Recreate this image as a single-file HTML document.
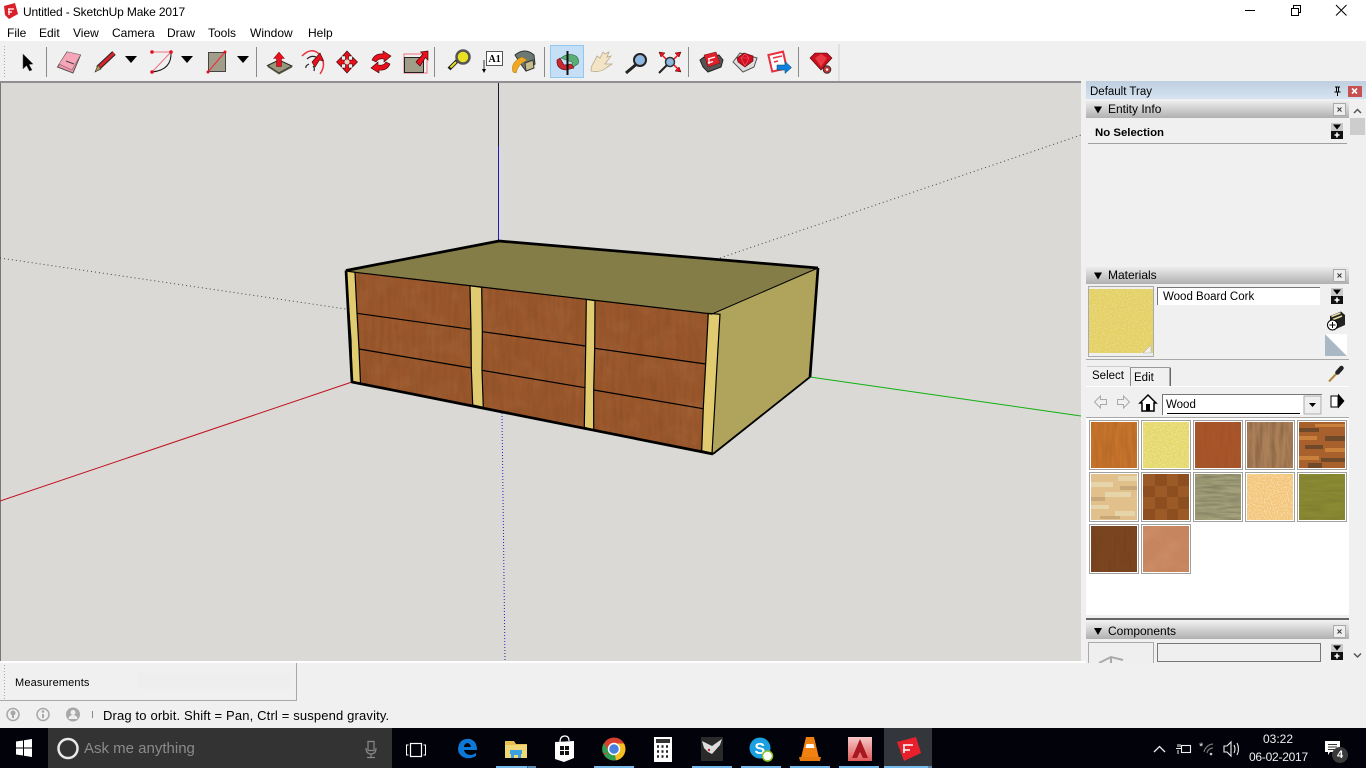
<!DOCTYPE html>
<html><head><meta charset="utf-8"><style>
html,body{margin:0;padding:0;width:1366px;height:768px;overflow:hidden;background:#f0f0f0}
body{position:relative;font-family:"Liberation Sans",sans-serif;font-size:12px;color:#000}
svg{position:absolute;left:0;top:0}
.t{position:absolute;white-space:nowrap;line-height:16px}
</style></head><body>
<svg width="1366" height="768" viewBox="0 0 1366 768" xmlns="http://www.w3.org/2000/svg">
<defs>
<filter id="gv" x="0" y="0" width="100%" height="100%"><feTurbulence type="fractalNoise" baseFrequency="0.25 0.03" numOctaves="3" seed="3"/><feColorMatrix values="0 0 0 0 0 0 0 0 0 0 0 0 0 0 0 1.6 0 0 0 -0.55"/></filter>
<filter id="gw" x="0" y="0" width="100%" height="100%"><feTurbulence type="fractalNoise" baseFrequency="0.04 0.05" numOctaves="4" seed="7"/><feColorMatrix values="0 0 0 0 1 0 0 0 0 0.7 0 0 0 0 0.45 1.4 0 0 0 -0.55"/></filter>
<filter id="gs" x="0" y="0" width="100%" height="100%"><feTurbulence type="fractalNoise" baseFrequency="0.7" numOctaves="2" seed="5"/><feColorMatrix values="0 0 0 0 1 0 0 0 0 1 0 0 0 0 .85 2.4 0 0 0 -1"/></filter>
<filter id="gh" x="0" y="0" width="100%" height="100%"><feTurbulence type="fractalNoise" baseFrequency="0.04 0.4" numOctaves="3" seed="9"/><feColorMatrix values="0 0 0 0 0 0 0 0 0 0 0 0 0 0 0 1.6 0 0 0 -0.55"/></filter>
<clipPath id="front"><polygon points="346,271 712,314 713,454 352,382"/></clipPath>
<linearGradient id="hdr" x1="0" y1="0" x2="0" y2="1"><stop offset="0" stop-color="#ececec"/><stop offset="1" stop-color="#b0b0b0"/></linearGradient>
<linearGradient id="tray" x1="0" y1="0" x2="0" y2="1"><stop offset="0" stop-color="#bfcfe0"/><stop offset="1" stop-color="#d6e3f0"/></linearGradient>
<linearGradient id="acad" x1="0" y1="0" x2="0" y2="1"><stop offset="0" stop-color="#f6c8c8"/><stop offset="1" stop-color="#e05a5a"/></linearGradient>
</defs>

<!-- chrome -->
<rect width="1366" height="41" fill="#fff"/>
<rect y="41" width="1366" height="40" fill="#f0f0f0"/>
<rect x="0" y="81" width="1081" height="2" fill="#8f8f8f"/>
<rect x="838.500" y="44" width="1" height="37" fill="#d0d0d0"/>
<path d="M4.500 46V78" stroke="#aaa" stroke-dasharray="1 2" fill="none"/>
<path d="M46.500 47V77M256.500 47V77M434.500 47V77M544.500 47V77M688.500 47V77M798.500 47V77" stroke="#8a8a8a" fill="none"/>

<!-- viewport -->
<rect x="1" y="83" width="1080" height="578" fill="#dad9d5"/>
<rect x="0" y="83" width="1" height="578" fill="#777"/>
<rect x="0" y="661" width="1086" height="2" fill="#fff"/>

<!-- axes -->
<path d="M498.500 83V146" stroke="#1a1a2e"/>
<path d="M498.500 146V241" stroke="#1c1cc8"/>
<path d="M0 501L352 382" stroke="#c01020"/>
<path d="M810 377L1081 416" stroke="#10b010"/>
<path d="M720 258L1081 135" stroke="#444" stroke-dasharray="1 3"/>
<path d="M0 258L346 309" stroke="#444" stroke-dasharray="1 3"/>
<path d="M502 413L505 661" stroke="#2020d0" stroke-dasharray="1 2"/>

<!-- box -->
<polygon points="346,271 499,241 818,268 712,314" fill="#857d47"/>
<polygon points="712,314 818,268 810,377 713,454" fill="#b0a45c"/>
<polygon points="346,271 712,314 713,454 352,382" fill="#9a572b"/>
<g clip-path="url(#front)"><rect x="340" y="265" width="380" height="195" filter="url(#gw)" opacity=".1"/><rect x="340" y="265" width="380" height="195" filter="url(#gv)" opacity=".07"/></g>
<g fill="#e0cb70" stroke="#000" stroke-width="1.200">
<polygon points="346,271 355,272.300 357,313 359,349 360.500,383.500 352,382 351,340 348,300"/>
<polygon points="470,285.700 481.700,287.300 482.300,331.700 482,370 483.300,407.300 472.700,405 471.300,368.300 471,329.300"/>
<polygon points="586.300,299.300 595,300.700 594.700,348.300 593.700,389.300 593.700,430 584.300,427.300 585,387.300 585.700,346.700"/>
<polygon points="708.300,313.300 720,314.300 717,365 714.500,410 712,453.300 701.700,450.700 703.300,408 705.700,363.300"/>
</g>
<path d="M357 313.300L471 329.300M482.300 331.700L585.700 346M594.700 348.300L705.700 364M359 349L471.300 368M482 370.300L585 387.700M594 390L703 408.700" stroke="#000" stroke-width="1.200" fill="none"/>
<path d="M355 272.300L712 314" stroke="#000" stroke-width="1.200" fill="none"/>
<path d="M712 314L818 268" stroke="#000" stroke-width="1" fill="none"/>
<path d="M346 270.500L499 241L818 268M346 270.500L352 382L713 454M810 377L818 268" fill="none" stroke="#000" stroke-width="2.700" stroke-linejoin="round"/>
<path d="M713 454L810 377" fill="none" stroke="#000" stroke-width="1.800"/>

<!-- tray -->
<rect x="1086" y="81" width="280" height="18" fill="url(#tray)"/>
<path d="M1335 87h5M1336.500 87v5h2v-5M1334.500 92h6M1337.500 92v4" stroke="#000" fill="none"/>
<rect x="1348" y="86" width="14" height="11" fill="#c75050"/>
<path d="M1352 88.500l5 5M1357 88.500l-5 5" stroke="#fff" stroke-width="1.600"/>
<rect x="1349" y="100" width="17" height="563" fill="#f0f0f0"/>
<path d="M1354 113l3.500-3.500l3.500 3.500" stroke="#555" stroke-width="1.500" fill="none"/>
<rect x="1350" y="118" width="15" height="17" fill="#cdcdcd"/>
<path d="M1354 653.500l3.500 3.500l3.500-3.500" stroke="#555" stroke-width="1.500" fill="none"/>

<rect x="1086" y="101" width="263" height="17" fill="url(#hdr)"/>
<path d="M1094 106.500h8l-4 7z" fill="#000"/>
<rect x="1333.500" y="103.500" width="12" height="12" fill="#eee" stroke="#aaa"/>
<path d="M1337.500 107.500l4 4M1341.500 107.500l-4 4" stroke="#333"/>
<rect x="1088" y="143" width="259" height="1" fill="#a0a0a0"/>
<g id="exp"><rect x="1331" y="123" width="12" height="8" fill="#c8c8c8"/><path d="M1333 124.500h8l-4 5z" fill="#000"/><rect x="1331" y="131" width="12" height="8" fill="#111"/><path d="M1337 132.500v5M1334.500 135h5" stroke="#fff" stroke-width="1.600"/></g>

<rect x="1086" y="267" width="263" height="17" fill="url(#hdr)"/>
<path d="M1094 272.500h8l-4 7z" fill="#000"/>
<rect x="1333.500" y="269.500" width="12" height="12" fill="#eee" stroke="#aaa"/>
<path d="M1337.500 273.500l4 4M1341.500 273.500l-4 4" stroke="#333"/>
<rect x="1088.500" y="286.500" width="65" height="70" fill="#efefef" stroke="#aaa"/>
<rect x="1089" y="289" width="64" height="64" fill="#e3cf62"/>
<rect x="1089" y="289" width="64" height="64" filter="url(#gs)" opacity=".35"/>
<path d="M1151 345v8h-8z" fill="#efefef" stroke="#aaa" stroke-width=".5"/>
<rect x="1157" y="287" width="163" height="18" fill="#fff"/>
<path d="M1157.500 305V287.500H1320" stroke="#777" fill="none"/>
<use href="#exp" y="165"/>
<path d="M1330 316L1341 311.500L1345 315V325L1336 329L1330 325Z" fill="#222"/>
<path d="M1331.500 316.500l9-3.500M1333 319.500l9-3.500" stroke="#e8e0a0" stroke-width="1.500"/>
<circle cx="1332.500" cy="325" r="5" fill="#fff" stroke="#000"/>
<path d="M1332.500 322v6M1329.500 325h6" stroke="#000"/>
<polygon points="1325,334 1347,356 1325,356" fill="#a9b8c4"/><polygon points="1325,334 1347,334 1347,356" fill="#fff"/>
<rect x="1086" y="359" width="263" height="1" fill="#a8a8a8"/>
<rect x="1086" y="386" width="263" height="1" fill="#fff"/>
<path d="M1130.500 367v19" stroke="#888"/>
<path d="M1131 367.500h38.500M1170 367v19" stroke="#999" fill="none" stroke-width="1"/>
<rect x="1169.500" y="368" width="1.500" height="18" fill="#666"/>
<path d="M1087 366.500h43" stroke="#ccc"/>
<path d="M1329 381.500L1337 373" stroke="#b08a40" stroke-width="2.200"/>
<path d="M1337.500 372.500L1341.500 368" stroke="#222" stroke-width="4.500" stroke-linecap="round"/>
<path d="M1094.500 402l6-6v3.500h6v5h-6v3.500z" fill="#f0f0f0" stroke="#aaa"/>
<path d="M1129.500 402l-6-6v3.500h-6v5h6v3.500z" fill="#f0f0f0" stroke="#aaa"/>
<path d="M1140 403l8-8l8 8h-2v8h-12v-8z" fill="#fff" stroke="#000" stroke-width="1.500"/>
<rect x="1146" y="404" width="4" height="7" fill="#000"/>
<rect x="1162" y="394" width="160" height="21" fill="#fff"/>
<path d="M1162.500 415V394.500H1322" stroke="#777" fill="none"/>
<rect x="1304" y="396" width="17" height="18" fill="#eee" stroke="#aaa"/>
<path d="M1309 403h7l-3.500 4z" fill="#000"/>
<path d="M1167 413.500H1300" stroke="#000"/>
<rect x="1331" y="396" width="7" height="11" fill="#fff" stroke="#000"/>
<path d="M1338 393.500l6.500 7.500l-6.500 7.500z" fill="#000"/>
<rect x="1086" y="417" width="263" height="1" fill="#a8a8a8"/>
<rect x="1086" y="418" width="263" height="197" fill="#fff"/>
<rect x="1086" y="618" width="263" height="2" fill="#666"/>
<rect x="1086" y="622" width="263" height="17" fill="url(#hdr)"/>
<path d="M1094 628h8l-4 7z" fill="#000"/>
<rect x="1333.500" y="625.500" width="12" height="12" fill="#eee" stroke="#aaa"/>
<path d="M1337.500 629.500l4 4M1341.500 629.500l-4 4" stroke="#333"/>
<rect x="1088.500" y="642.500" width="65" height="30" fill="#efefef" stroke="#aaa"/>
<path d="M1099 663l12-6l12 3M1111 657v6" stroke="#aaa" stroke-width="2" fill="none"/>
<rect x="1157.500" y="643.500" width="163" height="18" fill="#efefef" stroke="#777"/>
<use href="#exp" y="521"/>
<rect x="1086" y="663" width="263" height="12" fill="#f0f0f0"/>

<!-- thumbs -->
<g stroke="#a0a0a0" fill="#fff">
<rect x="1089.500" y="420.500" width="49" height="49"/><rect x="1141.500" y="420.500" width="49" height="49"/><rect x="1193.500" y="420.500" width="49" height="49"/><rect x="1245.500" y="420.500" width="49" height="49"/><rect x="1297.500" y="420.500" width="49" height="49"/>
<rect x="1089.500" y="472.500" width="49" height="49"/><rect x="1141.500" y="472.500" width="49" height="49"/><rect x="1193.500" y="472.500" width="49" height="49"/><rect x="1245.500" y="472.500" width="49" height="49"/><rect x="1297.500" y="472.500" width="49" height="49"/>
<rect x="1089.500" y="524.500" width="49" height="49"/><rect x="1141.500" y="524.500" width="49" height="49"/>
</g>
<rect x="1091" y="422" width="46" height="46" fill="#c8742c"/><rect x="1091" y="422" width="46" height="46" filter="url(#gv)" opacity=".12"/>
<rect x="1143" y="422" width="46" height="46" fill="#e4d666"/><rect x="1143" y="422" width="46" height="46" filter="url(#gs)" opacity=".5"/>
<rect x="1195" y="422" width="46" height="46" fill="#a9552a"/><rect x="1195" y="422" width="46" height="46" filter="url(#gv)" opacity=".06"/>
<rect x="1247" y="422" width="46" height="46" fill="#ac8058"/><rect x="1247" y="422" width="46" height="46" filter="url(#gv)" opacity=".25"/>
<rect x="1299" y="422" width="46" height="46" fill="#a8602c"/>
<g fill="#6f4a2a"><rect x="1299" y="428" width="20" height="4"/><rect x="1325" y="436" width="20" height="5"/><rect x="1305" y="445" width="18" height="4"/><rect x="1321" y="458" width="24" height="4"/><rect x="1308" y="463" width="14" height="5"/></g>
<g fill="#c8803a"><rect x="1315" y="424" width="30" height="3"/><rect x="1299" y="436" width="18" height="4"/><rect x="1325" y="448" width="20" height="4"/><rect x="1299" y="456" width="20" height="4"/></g>

<rect x="1091" y="474" width="46" height="46" fill="#e2c08c"/>
<g fill="#e6d4aa"><rect x="1091" y="482" width="22" height="5"/><rect x="1118" y="476" width="19" height="5"/><rect x="1105" y="492" width="26" height="5"/><rect x="1091" y="505" width="18" height="4"/><rect x="1115" y="511" width="20" height="5"/></g>
<g fill="#c8a878"><rect x="1091" y="497" width="14" height="4"/><rect x="1120" y="486" width="17" height="4"/><rect x="1100" y="516" width="20" height="3"/></g>
<rect x="1143" y="474" width="46" height="46" fill="#8e4f20"/>
<g fill="#9c5a26"><rect x="1143" y="474" width="12" height="12"/><rect x="1167" y="474" width="11" height="12"/><rect x="1155" y="486" width="12" height="11"/><rect x="1178" y="486" width="11" height="11"/><rect x="1143" y="497" width="12" height="12"/><rect x="1167" y="497" width="11" height="12"/><rect x="1155" y="509" width="12" height="11"/><rect x="1178" y="509" width="11" height="11"/></g>
<rect x="1195" y="474" width="46" height="46" fill="#a3a07a"/><rect x="1195" y="474" width="46" height="46" filter="url(#gh)" opacity=".25"/>
<rect x="1247" y="474" width="46" height="46" fill="#f3c377"/><rect x="1247" y="474" width="46" height="46" filter="url(#gs)" opacity=".6"/>
<rect x="1299" y="474" width="46" height="46" fill="#8a8a34"/><rect x="1299" y="474" width="46" height="46" filter="url(#gh)" opacity=".1"/>

<rect x="1091" y="526" width="46" height="46" fill="#7b4520"/><rect x="1091" y="526" width="46" height="46" filter="url(#gv)" opacity=".06"/>
<rect x="1143" y="526" width="46" height="46" fill="#c6855f"/><rect x="1143" y="526" width="46" height="46" filter="url(#gw)" opacity=".15"/>

<!-- bottom -->
<rect x="0" y="663" width="296" height="37" fill="#f0f0f0"/>
<path d="M296.500 663V700.500H0" stroke="#a8a8a8" fill="none"/>
<path d="M4.500 665V699" stroke="#aaa" stroke-dasharray="1 2"/>
<rect x="138" y="673" width="154" height="16" fill="#eeeeee"/>
<g fill="none" stroke="#a8a8a8" stroke-width="1.500"><circle cx="13" cy="714.500" r="6"/><circle cx="43" cy="714.500" r="6"/></g>
<circle cx="13" cy="713" r="2.500" fill="#a8a8a8"/><path d="M13 714v4" stroke="#a8a8a8" stroke-width="2"/>
<circle cx="43" cy="711.500" r="1.300" fill="#a8a8a8"/><path d="M43 714v4" stroke="#a8a8a8" stroke-width="2"/>
<circle cx="73" cy="714.500" r="7" fill="#a8a8a8"/><circle cx="73" cy="712.500" r="2.500" fill="#eee"/><path d="M68.500 719a4.500 4 0 0 1 9 0" fill="#eee"/>
<path d="M92.500 711v7" stroke="#888"/>

<!-- toolbar icons -->
<path d="M23 54V69L26.500 65.500L29.500 71L32 70L29 64.500L33 64Z" fill="#000" stroke="#555" stroke-width=".5"/>
<polygon points="67,52 80.500,55 73,73 57.500,67" fill="#f393aa" stroke="#555"/>
<path d="M67 52L59 64L72 70L80.500 55" fill="#f7a6ba" stroke="#555" stroke-width=".5"/>
<path d="M66 61l8 3" stroke="#444"/>
<path d="M98 68L114 53" stroke="#222" stroke-width="5"/><path d="M98 68L114 53" stroke="#d8232a" stroke-width="3"/>
<path d="M95 72L98 65L101 69Z" fill="#b09050" stroke="#333" stroke-width=".6"/>
<path d="M125 56h12l-6 7z" fill="#000"/><path d="M181 56h12l-6 7z" fill="#000"/><path d="M237 56h12l-6 7z" fill="#000"/>
<path d="M152 52H171L152 72" fill="none" stroke="#f07080"/>
<path d="M152 72Q172 70 171 52" fill="none" stroke="#111"/>
<circle cx="152" cy="52" r="1.800" fill="#e01020"/><circle cx="171" cy="52" r="1.800" fill="#e01020"/><circle cx="152" cy="72" r="1.800" fill="#e01020"/>
<rect x="208.500" y="52.500" width="17" height="19" fill="#a09e88" stroke="#444"/>
<path d="M225 52L208 72" stroke="#f03040" stroke-width="1.300"/>
<circle cx="225" cy="52" r="1.500" fill="#e01020"/><circle cx="208" cy="72" r="1.500" fill="#e01020"/>
<path d="M267.500 65.500L279 60L292 66L279 73Z" fill="#9a977e" stroke="#222"/><path d="M267.500 65.500V67L279 74.500L292 67.500V66L279 73Z" fill="#5c5a48"/>
<path d="M279 52L284.500 58.500H281.500V66.500H276.500V58.500H273.500Z" fill="#e8101c" stroke="#400" stroke-width=".4"/>
<path d="M302 56Q312 46 320 55Q327 64 320 74" fill="none" stroke="#e83040" stroke-width="1.500"/>
<path d="M307 59Q311 55 316 57M309 64Q305 66 306 68M313 66Q315 68 314 71" fill="none" stroke="#222" stroke-width="1.200"/>
<path d="M312 62L320 53L323.500 61L319.500 60L315 67Z" fill="#e8101c" stroke="#300" stroke-width=".6"/>
<path d="M347 51l4.500 5h-3v4h4v-3l5 5l-5 5v-3h-4v4h3l-4.500 5l-4.500-5h3v-4h-4v3l-5-5l5-5v3h4v-4h-3z" fill="#e8101c" stroke="#300" stroke-width=".6"/>
<circle cx="347" cy="62" r="2.500" fill="#dcd8c8"/>
<path d="M372 60Q375 53 383 54L383 51L391 56L384 62L384 59Q378 58 376 62Z" fill="#e8101c" stroke="#300" stroke-width=".6"/>
<path d="M390 64Q387 71 379 70L379 73L371 68L378 62L378 65Q384 66 386 62Z" fill="#e8101c" stroke="#300" stroke-width=".6"/>
<rect x="404" y="54" width="23" height="19" fill="none" stroke="#f07080"/>
<rect x="404.500" y="57.500" width="19" height="15" fill="#a09e88" stroke="#222"/>
<path d="M416 62L423 54L420.500 52L428 51L428 60L425.500 57.500L420 66Z" fill="#e8101c" stroke="#300" stroke-width=".6"/>
<path d="M449 69L458 60" stroke="#222" stroke-width="4"/><path d="M450.500 67.500L456 62" stroke="#e8e020" stroke-width="2"/>
<circle cx="463" cy="57" r="6.500" fill="#e8e020" stroke="#555" stroke-width="2.500"/>
<rect x="486.500" y="51.500" width="16" height="14" fill="#fff" stroke="#555"/>
<text x="488.500" y="62" font-family="Liberation Serif,serif" font-size="10" font-weight="bold">A1</text>
<path d="M484 60V70" stroke="#333"/><path d="M482 69h4l-2 4z" fill="#000"/>
<path d="M515 55Q525 47 534 55L535 64L526 71L520 63Z" fill="#6a7a72" stroke="#333"/>
<path d="M525 63L533 60L534 68L526 71Z" fill="#c8bd8a" stroke="#333"/>
<path d="M513 72Q510 62 522 57L527 60Q518 64 516 73Z" fill="#f0a820" stroke="#a87010" stroke-width=".5"/>
<rect x="550.500" y="45.500" width="33" height="32" fill="#c5e0f6" stroke="#90c8f0"/>
<path d="M561 58Q568 52 576 56Q580 60 578 64L573 67L572 62L566 60Z" fill="#5cae78" stroke="#2a6a40" stroke-width=".6"/>
<path d="M557 60Q556 69 566 70L574 68L571 64L564 65L560 58Z" fill="#c82830" stroke="#601010" stroke-width=".6"/>
<path d="M567.500 51V75" stroke="#111" stroke-width="2"/>
<path d="M591 71Q591 66 594 62L597 56L600 58L603 52L605 54L609 52L607 57L611 56L605 64L612 64L606 68Q600 73 591 71Z" fill="#f2e4c4" stroke="#b8ac90" stroke-width=".8"/>
<circle cx="640" cy="60" r="6" fill="#8fb8e0" stroke="#222" stroke-width="2"/>
<path d="M635.500 65L626 73" stroke="#222" stroke-width="3"/>
<circle cx="670" cy="62" r="4.500" fill="#8fb8e0" stroke="#333" stroke-width="1.500"/>
<path d="M667 65L659 73" stroke="#222" stroke-width="2"/>
<path d="M659 52l6 1l-4 4zM681 52l-6 1l4 4zM681 72l-6-1l4-4z" fill="#e8101c" stroke="#300" stroke-width=".5"/><path d="M661 54l5 5M679 54l-5 5M679 70l-5-5" stroke="#e8101c" stroke-width="1.500"/>
<path d="M700 60L704 57L719 55L723 60L721 67L708 72L703 67Z" fill="#555" stroke="#222"/>
<path d="M704 55L716 52L720 63L708 67Z" fill="#e0202c" stroke="#701010" stroke-width=".5"/>
<path d="M708 59l7-2M708 63l5-1.500M709 58v6" stroke="#fff" stroke-width="1.200" fill="none"/>
<path d="M733 62L740 53L757 58L754 67L743 72Z" fill="#ddd" stroke="#555"/>
<path d="M737 58L744 53L753 56L753 61L745 67L738 62Z" fill="#d01020" stroke="#500" stroke-width=".6"/>
<path d="M741 58h8M745 54l-4 4l4 8l4-8z" stroke="#f06070" stroke-width=".6" fill="none"/>
<rect x="770" y="53" width="15" height="17" fill="#fff" stroke="#e83040" stroke-width="2" transform="rotate(-13 778 61)"/>
<path d="M773 58l9-2M774 62l4-1" stroke="#e83040" stroke-width="1.500"/>
<path d="M777 65h8v-3.500l6.500 6l-6.500 6v-3.500h-8z" fill="#1080e0" stroke="#044" stroke-width=".5"/>
<path d="M810 58L815 53H827L832 58L821 70Z" fill="#c81020" stroke="#500" stroke-width=".6"/>
<path d="M815 58L821 54L827 58L821 67Z" fill="#e83a40"/>
<circle cx="827" cy="69.500" r="3.800" fill="#c03030" stroke="#333" stroke-width="1"/><circle cx="827" cy="69.500" r="1.300" fill="#eee"/>

<!-- app icon + window controls -->
<path d="M4 6L15 3L18 14L9 19L5 15Z" fill="#d8202a"/>
<path d="M8 9h6M8 12h4M9 9v6" stroke="#fff" stroke-width="1.200"/>
<path d="M1245 10.500H1255" stroke="#000"/>
<rect x="1291.500" y="8.500" width="7" height="7" fill="#fff" stroke="#000"/><path d="M1293.500 8V5.500H1300.500V12.500H1298.500" fill="none" stroke="#000"/>
<path d="M1336 5L1346.500 15.500M1346.500 5L1336 15.500" stroke="#000"/>

<!-- taskbar -->
<rect y="728" width="1366" height="40" fill="#02020a"/>
<rect x="48" y="728" width="344" height="40" fill="#333"/>
<rect x="884" y="728" width="48" height="40" fill="#33363b"/>
<path d="M16 741.500L23 740.500V747.500H16ZM24 740.300L32 739V747.500H24ZM16 748.500H23V755.500L16 754.500ZM24 748.500H32V757L24 755.700Z" fill="#fff"/>
<circle cx="68" cy="748.500" r="9.500" fill="none" stroke="#e8e8e8" stroke-width="2.500"/>
<path d="M368 741.500h6v9h-6z" fill="none" stroke="#888" stroke-width="1.200"/><path d="M366 748q0 6 5 6q5 0 5-6M371 754v3M367 757.500h8" fill="none" stroke="#888" stroke-width="1.200"/>
<rect x="410.500" y="743.500" width="11" height="13" fill="none" stroke="#fff" stroke-width="1.200"/><path d="M408.500 745h-2v10h2M423.500 745h2v10h-2" fill="none" stroke="#fff"/>
<path d="M458 749Q459 738 470 739Q477 741 477 750H464Q465 755 472 755L476 753V756Q469 760 463 757Q458 754 458 749ZM464 747H471Q470 743 467 743Q464 744 464 747Z" fill="#0c78d8" fill-rule="evenodd"/>
<path d="M505 741H514L516 744H527V749H505Z" fill="#e8c050"/><rect x="505" y="745" width="22" height="13" fill="#f0d878"/>
<path d="M511 753H521V758H518V755H514V758H511Z" fill="#3aa0e0"/><rect x="510" y="750" width="12" height="4" fill="#3aa0e0"/>
<path d="M555 742L574 741V758L564 762L555 759Z" fill="#fff"/>
<path d="M560 742Q560 736 565 736Q569 736 569 741" fill="none" stroke="#fff" stroke-width="1.200"/>
<path d="M560 750h4v-4h-4zM565 746h4v4h-4zM560 755h4v-4h-4zM565 751h4v4h-4z" fill="#111"/>
<circle cx="614" cy="749" r="11.500" fill="#d84030"/>
<path d="M614 749L604 755A11.500 11.500 0 0 0 616 760.300Z" fill="#30a050"/><path d="M614 749L616 760.400A11.500 11.500 0 0 0 624 743.500H614Z" fill="#f4c020"/><path d="M603 753.500A11.500 11.500 0 0 1 604 743L609 752Z" fill="#30a050"/>
<circle cx="614" cy="749" r="5.500" fill="#4a80e0" stroke="#fff" stroke-width="1.500"/>
<rect x="654" y="737" width="18" height="25" fill="#fff"/><rect x="656" y="739" width="14" height="4" fill="#333"/>
<path d="M657 746.500h2M661.500 746.500h2M666 746.500h2M657 751.500h2M661.500 751.500h2M666 751.500h2M657 756.500h2M661.500 756.500h2M666 756.500h2" stroke="#222" stroke-width="2.500"/>
<rect x="701" y="737" width="22" height="24" fill="#2a2a2a"/>
<path d="M702 741L712 746L722 739L720 745L712 754L708 752L704 748Z" fill="#ddd"/><circle cx="709" cy="750" r="1.200" fill="#c02030"/>
<circle cx="760" cy="748" r="10.500" fill="#1aa0e0"/><text x="754.500" y="754" font-size="16" font-weight="bold" fill="#fff">S</text>
<circle cx="767.500" cy="756" r="5" fill="#fff" stroke="#8ac020" stroke-width="1.500"/>
<path d="M810 737L814 737L819 758H801L806 737Z" fill="#f08010"/>
<path d="M806.500 744H813.500L814.500 748H805.500Z" fill="#fff"/>
<path d="M799 757H821L820 761H800Z" fill="#e87810"/>
<rect x="848" y="737" width="24" height="24" fill="url(#acad)"/>
<path d="M860 739L868 758H863L860 752L857 758H852Z" fill="#a81820"/>
<path d="M897 742L916 737L921 753L904 761Z" fill="#e8202c"/>
<path d="M903 745h10M903 750h7M904 745v8" stroke="#fff" stroke-width="1.500" fill="none"/>
<g fill="#76b9ed"><rect x="496" y="766" width="31.500" height="2"/><rect x="528" y="766" width="8" height="2" opacity=".75"/><rect x="594" y="766" width="40" height="2"/><rect x="692" y="766" width="40" height="2"/><rect x="741" y="766" width="40" height="2"/><rect x="790" y="766" width="40" height="2"/><rect x="839" y="766" width="40" height="2"/><rect x="884" y="766" width="44" height="2"/><rect x="928" y="766" width="4" height="2" opacity=".6"/></g>
<path d="M1154 752L1159.500 746.500L1165 752" fill="none" stroke="#eee" stroke-width="1.300"/>
<rect x="1181.500" y="745.500" width="9" height="7" fill="none" stroke="#eee" stroke-width="1.100"/><path d="M1176 748.500h5M1178 744v3M1180 744v3M1178 750v4" stroke="#eee"/>
<path d="M1204 752a10 10 0 0 1 9-8" fill="none" stroke="#777" stroke-width="1.200"/><path d="M1207 753a6 6 0 0 1 6-5" fill="none" stroke="#777" stroke-width="1.200"/><circle cx="1211" cy="754" r="1.300" fill="#ccc"/>
<text x="1199" y="750" font-size="11" fill="#eee">*</text>
<path d="M1224 746h3l4-4v14l-4-4h-3z" fill="none" stroke="#eee" stroke-width="1.100"/><path d="M1234 745q2 4 0 8M1237 743q3 6 0 12" fill="none" stroke="#eee" stroke-width="1.100"/>
<path d="M1325 741H1340V752H1330L1328 755V752H1325Z" fill="#fff"/><path d="M1328 744.500h9M1328 747h9M1328 749.500h9" stroke="#333"/>
<circle cx="1340" cy="755" r="8" fill="#3a3a3a"/>
</svg>

<div class="t" style="left:23px;top:4px;letter-spacing:-.14px">Untitled - SketchUp Make 2017</div>
<div class="t" style="left:7px;top:25px">File</div>
<div class="t" style="left:39px;top:25px">Edit</div>
<div class="t" style="left:73px;top:25px">View</div>
<div class="t" style="left:112px;top:25px">Camera</div>
<div class="t" style="left:167px;top:25px">Draw</div>
<div class="t" style="left:208px;top:25px">Tools</div>
<div class="t" style="left:250px;top:25px">Window</div>
<div class="t" style="left:308px;top:25px">Help</div>
<div class="t" style="left:1090px;top:84px;font-size:11.500px">Default Tray</div>
<div class="t" style="left:1108px;top:101px">Entity Info</div>
<div class="t" style="left:1095px;top:125px;font-weight:bold;font-size:11.400px">No Selection</div>
<div class="t" style="left:1108px;top:267px">Materials</div>
<div class="t" style="left:1163px;top:289px;font-size:11.500px">Wood Board Cork</div>
<div class="t" style="left:1092px;top:368px;font-size:11.500px">Select</div>
<div class="t" style="left:1134px;top:370px;font-size:11.500px">Edit</div>
<div class="t" style="left:1166px;top:397px;font-size:11.500px">Wood</div>
<div class="t" style="left:1108px;top:623px">Components</div>
<div class="t" style="left:15px;top:675px;font-size:11px;letter-spacing:.15px">Measurements</div>
<div class="t" style="left:103px;top:708px;font-size:13px;letter-spacing:.15px">Drag to orbit. Shift = Pan, Ctrl = suspend gravity.</div>
<div class="t" style="left:84px;top:741px;font-size:15px;color:#8a8a8a">Ask me anything</div>
<div class="t" style="left:1263px;top:731px;color:#eee">03:22</div>
<div class="t" style="left:1249px;top:749px;color:#eee;letter-spacing:-.25px">06-02-2017</div>
<div class="t" style="left:1337px;top:747px;color:#fff;font-weight:bold;font-size:11px">4</div>
</body></html>
